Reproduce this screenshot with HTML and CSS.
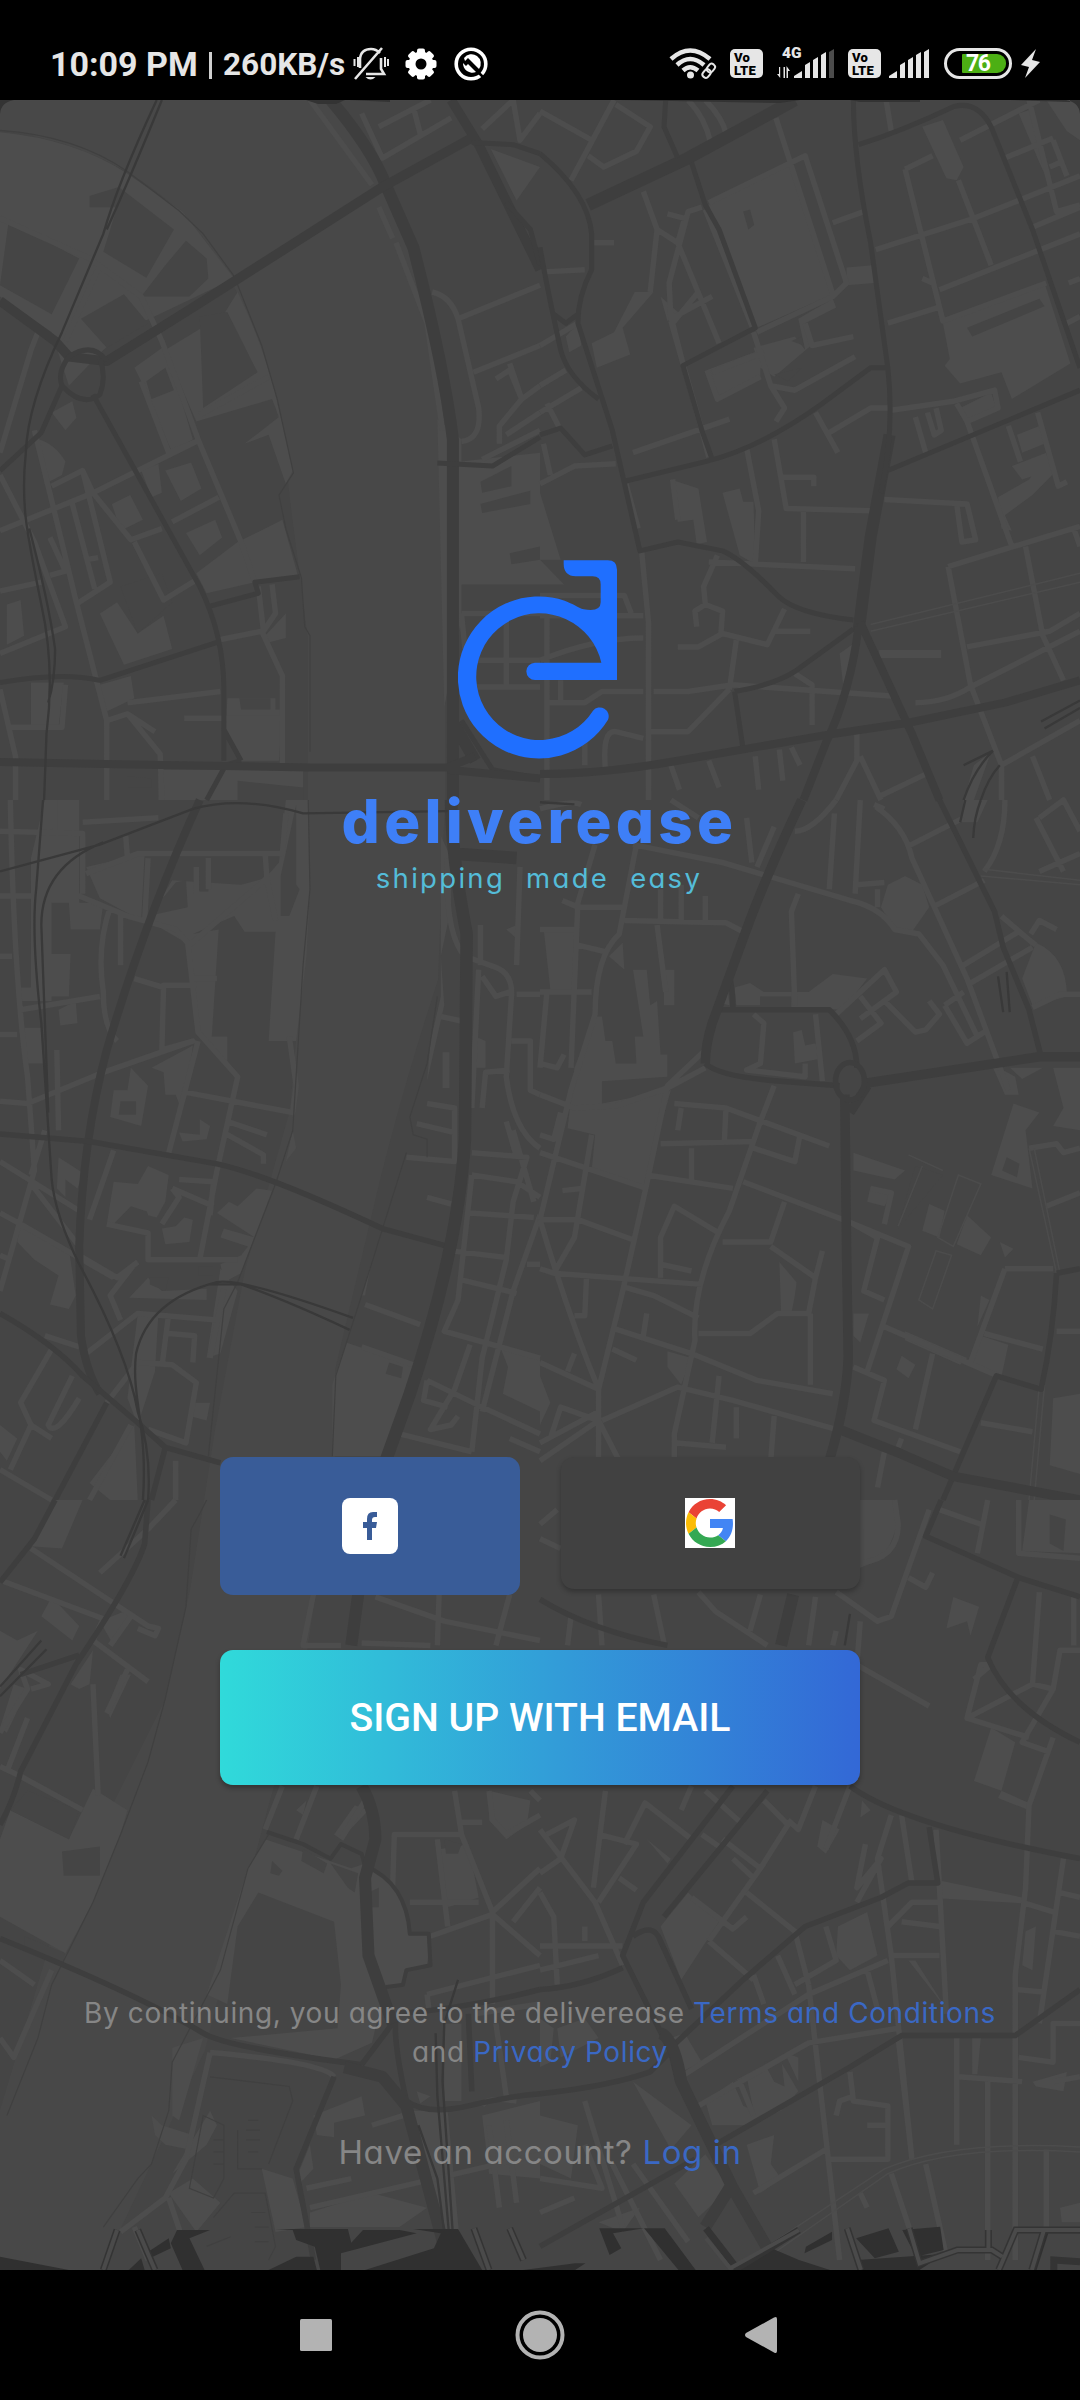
FILE: index.html
```html
<!DOCTYPE html>
<html lang="en">
<head>
<meta charset="utf-8">
<title>deliverease</title>
<link rel="stylesheet" href="styles.css">
</head>
<body>
<header class="status">
  <div class="status-left">
    <span class="clock">10:09 PM</span><span class="divider"></span><span class="speed">260KB/s</span>
    <svg class="i-bell" width="36" height="34" viewBox="0 0 36 34" fill="none" stroke="#e6e6e6" stroke-width="2.6"><path d="M7 21V13C7 5 12 2 18 2c4 0 7 2 9 4M28 11V22l3 5H13M2 32 29 1" /><path d="M12.500 30h10q-5 5-10 0z" fill="#e6e6e6" stroke="none"/><path d="M1.500 12v7M5 10v10M32 10v10M35 12v7" stroke-width="2"/></svg>
    <svg class="i-gear" width="32" height="32" viewBox="-16 -16 32 32"><g fill="#fff"><circle r="12.500"/><rect x="-4" y="-15.500" width="8" height="31" rx="2"/><rect x="-4" y="-15.500" width="8" height="31" rx="2" transform="rotate(45)"/><rect x="-4" y="-15.500" width="8" height="31" rx="2" transform="rotate(90)"/><rect x="-4" y="-15.500" width="8" height="31" rx="2" transform="rotate(135)"/></g><circle r="5.500"/></svg>
    <svg class="i-disc" width="34" height="34" viewBox="-17 -17 34 34"><circle r="14.800" fill="none" stroke="#fff" stroke-width="3.600"/><path d="M-7-6A9.300 9.300 0 0 1 8 5L1-2-3-6-6-3z" fill="#fff"/><path d="M-8-1A9.300 9.300 0 0 0 5 8L-3 0-5 2z" fill="#fff"/><path d="M7 8 14 15" stroke="#000" stroke-width="2.500"/></svg>
  </div>
  <div class="status-right">
    <svg class="i-wifi" width="48" height="33" viewBox="0 0 48 33" fill="none" stroke="#e6e6e6" stroke-width="4.500"><path d="M2 12Q21-5 41 12M8 18Q21 6 35 18M14 23.500Q21 17 29 23.500"/><circle cx="21.500" cy="28" r="3.500" fill="#e6e6e6" stroke="none"/><g stroke-width="2"><rect x="38.500" y="16" width="6.500" height="9" rx="3" transform="rotate(38 41 21)"/><rect x="34.500" y="21.500" width="6.500" height="9" rx="3" transform="rotate(38 37 26)"/></g></svg>
    <span class="volte"><b>Vo</b><b>LTE</b></span>
    <span class="net"><b>4G</b><svg width="57" height="30" viewBox="0 0 57 30"><g fill="#e6e6e6"><path d="M3.200 18v11L0 25h2V18zM6.500 18v11h1.500V18zM9.500 29V17l3.500 5h-2v7z"/><path d="M17 29v-2l8-5v7zM28 16l5-3v16h-5zM36 11l5-3v21h-5zM44 6l5-3v26h-5z"/></g><path d="M52 3l5-3v29h-5z" fill="#4c4c4c"/></svg></span>
    <span class="volte"><b>Vo</b><b>LTE</b></span>
    <svg class="i-bars" width="41" height="30" viewBox="16 0 41 30" fill="#e6e6e6"><path d="M17 29v-2l8-5v7zM28 16l5-3v16h-5zM36 11l5-3v21h-5zM44 6l5-3v26h-5zM52 3l5-3v29h-5z"/></svg>
    <span class="battery"><span class="level">76</span></span>
    <svg class="i-bolt" width="20" height="30" viewBox="0 0 20 30"><path d="M15 0 0 16l8 2-4 11L19 13l-8-2z" fill="#e6e6e6"/></svg>
  </div>
</header>

<main class="screen">
<svg class="map" width="1080" height="2170" viewBox="0 100 1080 2170" aria-hidden="true">
  <rect class="land" y="100" width="1080" height="2170"/>
  <!-- river -->
  <path class="water" d="M0 100H330Q372 130 395 220 440 300 445 450V800L438 980Q405 1080 380 1180L335 1370 335 1460 300 1700 270 1800 230 1950 205 2050 120 2230 100 2270H0V2110L60 1910 165 1700 190 1590 215 1430 245 1270 290 1110 308 900V640L290 500Q270 300 180 212 110 145 0 130Z"/>

  <g transform="translate(0 100) scale(.34439 .44643)">
    <path class="park" d="M0 72Q220 88 370 165L530 250 680 400 380 510 300 560 200 640 150 520 0 440ZM480 560 650 480 690 430Q760 540 800 660L850 830 830 860 780 750 710 770 810 710 790 670 570 720ZM390 600 480 550 560 760 500 790 410 630ZM110 760Q160 770 190 810L180 840 130 860ZM150 700 210 675 222 712 190 740ZM480 830 555 812 585 870 525 898ZM325 905 378 885 415 940 350 965ZM540 970 625 940 645 980 580 1020ZM570 1060 690 990 770 960 820 940 865 1065 740 1080 600 1105ZM290 1150 340 1125 400 1195 475 1155 500 1230 360 1265 320 1200ZM90 1305H185L170 1405 90 1400ZM290 1310 380 1290 390 1340 310 1370ZM1338 810 1568 790V1085H1338ZM1270 715 1340 760V1160L1290 1360ZM460 1500H880V1568H460ZM660 1340H800V1365H820L810 1480H700L655 1420ZM1425 110 1568 150 1500 225ZM20 1130 60 1120 70 1200 20 1220ZM770 1200 830 1150V1205L780 1215ZM410 830 460 815 470 880 440 890Z"/>
    <path class="land" d="M25 272 230 355 150 480 0 415ZM260 215 345 195 505 290 425 398 300 340 340 240H260ZM410 440 480 370 540 315 600 355 605 400 550 440ZM235 490 360 435 430 500 310 555ZM580 485 660 475 748 610 590 690ZM425 630 480 600 505 650 440 670ZM695 1340H785V1365H700ZM1395 855 1485 820V865L1400 880ZM1395 905 1540 875V905L1400 925ZM1480 1015 1568 1000V1030L1485 1040ZM350 1090 470 1060 500 1125 400 1195ZM370 1515 440 1520V1540H370ZM690 1525 880 1540V1568H690Z"/>
    <path class="minor" d="M0 265 260 355 410 440 470 540 575 760 700 990 740 1080M0 790 90 560 110 520M290 370 190 540M100 740 170 960 220 1120 310 1390V1568M0 965 270 880 570 765M240 830 320 1080 220 1130M0 840 100 990 190 1180 0 1240M150 865 240 830 270 880 380 985 470 960M210 905 275 1095M390 990 475 1120 570 1075M500 945 635 890M410 630 490 790 570 765M580 705 780 620M630 1210 760 1190 820 1290V1490M750 1090 765 1190 800 1150 790 1085M370 1350 640 1325M370 1375 465 1465 470 1568M310 1390 370 1375 450 1415M535 1385H820M30 1405H180L190 1310M0 1320 45 1470V1568M145 1065 190 1055 145 980M250 1030 285 1025M1050 30 1110 130 1310 40M1100 60 1250 0M1200 15 1220 75M1255 430Q1310 440 1330 490L1390 690Q1400 760 1340 765M1330 490 1568 415M1375 610 1568 550M1440 625 1480 605 1515 670 1568 640M1480 590 1515 670 1450 730V770M1470 750 1568 700M1400 805 1568 740M1100 240 1140 310M1150 320 1240 500 1285 740M1340 1150H1568M1340 1255H1568M1345 1315H1568M1470 1150V1315M1340 1150 1350 1230M1400 65 1490 0 1510 90 1568 30M900 0 1080 190M120 1080 0 1100"/>
    <path class="shore" d="M0 68Q220 80 370 160L520 248 590 300 680 395 760 550 805 670 852 835 810 885 830 960 875 1070 885 1180 900 1200V1460"/>
    <path class="major w10" d="M960 0Q1080 110 1120 190L1200 330Q1290 600 1315 760V1568M1320 1400 1380 1480"/>
    <path class="major w9" d="M0 450 160 540 200 575 310 585 560 465 1110 195 1370 85M1310 0 1390 100 1568 380"/>
    <path class="major w5" d="M310 585Q270 540 200 575 165 610 180 640L120 745 0 830M180 640Q240 690 290 660 310 620 290 580M270 660 400 840 580 1090Q650 1200 650 1320V1480M605 1135 750 1105 740 1080 870 1068M0 1305Q180 1280 290 1300L630 1215M600 1568 655 1490 700 1480M650 1410 700 1480M1270 813 1430 820 1568 755M1370 95 1490 100 1568 120M1470 230 1540 290 1568 370M1340 1390 1430 1500 1568 1520"/>
    <path class="major w8" d="M0 1483 340 1488 900 1495H1300L1380 1470M1300 1500 1568 1520"/>
    <path class="rail" d="M455 0Q340 190 300 300L180 520Q80 680 75 790C60 900 75 960 120 1130Q160 1270 135 1420L128 1568M470 0Q380 170 310 290M85 960Q140 1120 160 1230 160 1300 140 1350"/>
  </g>

  <g transform="translate(540 100) scale(.34439 .44643)">
    <path class="park" d="M490 235 720 140 850 435 630 510ZM1110 60 1170 45 1230 150 1210 180 1180 175ZM1170 500 1465 410 1540 590 1370 670 1340 610 1220 635 1175 595 1190 580ZM150 545 215 520 275 430 330 430 240 510 262 570 165 600ZM620 555 740 530 770 560 750 490 850 445 860 465 770 500 795 545 680 620 640 600ZM485 605 640 560 640 620 510 665ZM380 850 460 870 485 990 455 995 445 940 400 945ZM530 880 580 870 590 900 620 900 625 1040 580 1020ZM890 375 965 370 970 410 890 415ZM1330 890 1420 850 1480 790 1500 830 1430 885 1350 930 1370 965 1340 960ZM1370 820 1470 790 1480 830 1400 850ZM1385 750 1450 730 1465 770 1400 790ZM1220 690 1310 655 1325 690 1240 715ZM1390 30 1430 20 1480 190 1450 140ZM1470 0H1568V90L1530 70ZM870 1240 915 1215 880 1310ZM985 1232H1165V1250H985ZM0 880 60 1030H0ZM0 1030 70 1085H0ZM75 530 110 500 120 550 85 565ZM1260 1490 1310 1460 1260 1568H1230ZM350 440 400 475 370 495Z"/>
    <path class="land" d="M590 250 610 245 622 280 605 290ZM1240 510 1450 445 1465 462 1255 530ZM730 540 760 530 765 550ZM680 615 760 600 720 630Z"/>
    <path class="minor" d="M0 25 150 90M215 0 90 180M140 125 185 150 280 115 320 60 220 10M430 0Q480 40 495 95M480 0Q530 40 540 75M685 40 850 435M490 230 770 125 890 410 850 440 630 520M850 275 940 250M470 240 430 250 375 410 380 490 500 440M300 205 340 290 320 430M370 255 420 265 400 320 520 545M340 290 400 320M380 495 470 740 490 800M460 430 385 500 415 590M480 245 620 515M150 320H215M10 385 130 380M0 550 110 500M0 640 75 605M0 700 120 645M20 680 60 740M270 790 550 715M620 520 670 640 740 650 915 575M670 640 710 690 685 720M485 605 515 670 640 620M500 610 650 565M770 500 790 550 910 530M800 700 865 790M840 745 960 690H1015M680 760 715 915 960 920M705 845H795V865M765 920V1035M600 780 635 920 625 1040M250 860 285 960M385 850 400 940M490 1035 915 1050M515 1020 475 1090 480 1130 530 1145 525 1200M455 1180 450 1145 480 1130M400 1225H460L530 1195 660 1220 710 1140M680 1190H785M570 1210 550 1320M295 1010 315 1170V1568M330 1325H430L560 1310 1020 1335M320 1415H430L550 1320M740 1285 790 1310V1400M190 1500Q180 1410 220 1415L300 1430M0 1110H245L265 1150M0 1155H300M0 1255Q160 1205 300 1205M20 1350H130L180 1325H300M20 1110V1568M60 1300V1350M130 1420V1490M380 1490 405 1545M490 1480 520 1540M625 1470 635 1545M695 1455 705 1525M730 1450 755 1490M920 1420V1480L860 1568M930 1470 990 1568M985 1560 1120 1510M975 335 1260 265 1568 170M1060 155 1140 125M1060 155 1170 495 1470 410M1215 180 1310 370M1160 425 1568 300M1010 500 1155 465M1110 400 1140 410M1220 90 1450 0M1350 130 1490 85M1420 0 1500 250 1568 235M1430 285 1568 240M1490 90 1530 170M1480 150 1510 140M1530 500 1568 485M1535 410 1568 400M1020 695 1200 675 1320 650 1330 690 1240 720 1210 680M1090 710 1120 790M1125 700 1145 750 1165 740 1150 690M1240 720 1370 1000M1360 730 1395 810M1445 700 1505 865 1530 855M1000 895 1240 905 1265 985 1225 990 1210 905M1185 1045 1568 955M1185 1045 1250 1310 1340 1490V1568M1410 1000 1460 1200 1520 1300M1240 1225 1480 1190 1568 1150M1090 1350Q1180 1350 1250 1315L1568 1190M1340 1490 1568 1390M1430 1470 1480 1568M1550 960 1568 1000M1005 0 1020 70M0 860 100 820 220 815M10 770 30 840"/>
    <path class="thin" d="M960 1175 1568 1060M960 1190 1568 1080"/>
    <path class="major w11" d="M140 235 430 130 740 0"/>
    <path class="major w10" d="M925 1190 960 980 1015 750"/>
    <path class="major w5" d="M0 120Q140 210 150 300V380Q110 440 110 500L210 740 290 1010 400 990 530 1010Q590 1030 690 1110 740 1150 910 1165M0 330Q20 420 60 560 80 620 170 670M0 750 60 735 130 795 210 775M240 855 480 810Q640 780 820 680L960 600H1010M365 0 360 60 400 130M440 140 480 235 520 290 625 510 415 595 470 740 500 805M910 0Q910 130 960 320L1010 600Q1030 740 990 880M925 100Q1050 70 1200 15 1270 0 1310 60L1430 290 1568 600M1010 830 1568 650M565 1325Q680 1310 740 1280L910 1185M565 1325 590 1455M40 480 75 500 110 480"/>
    <path class="major w8" d="M0 1510Q180 1510 400 1480L850 1420 1070 1395 1350 1350 1568 1300M925 1180Q900 1330 830 1440L765 1568M930 1170 1080 1420 1160 1568"/>
    <path class="rail" d="M1455 1392 1568 1345M1465 1408 1568 1362M1230 1490 1315 1458 Q1260 1500 1230 1568M1335 1490 Q1300 1520 1280 1568"/>
  </g>

  <g transform="translate(0 800) scale(.34439 .44643)">
    <path class="park" d="M130 0H230V230H150V450H60V420H90V130ZM250 150 420 120 410 270 290 220ZM430 270 500 180 700 190 770 175 810 140 830 0H895L900 200 890 350 860 540H780L800 295H710L680 260 560 300 635 290 615 530 660 530V590L575 520 540 320ZM200 230H300L290 290H205ZM150 345H205L200 440H150ZM70 510H120L130 590H75ZM170 470 220 450 225 500 175 505ZM440 600 560 550 540 670 520 680 510 660H480L475 610ZM330 650H370L380 600 430 640 410 730 320 710ZM400 860 430 820 490 840 480 900 455 935 430 930ZM330 855 400 860 450 900 460 930 380 910 330 950H310ZM470 960 510 955 535 935 560 940 550 990 480 995ZM520 745 580 750V715L610 730 600 760 530 765ZM630 925 665 900 690 910 745 870 790 875 700 1060 650 1080 640 1040 700 1020 720 1000 640 980 650 960 740 980ZM60 950 200 1005 220 1110 200 1140 145 1130 170 1065 100 1030 50 990ZM430 1070 470 1100 600 1095 600 1120 375 1115ZM640 1050 690 1100 640 1240 600 1250ZM400 1150 460 1150 450 1280 400 1400 370 1340ZM170 800 240 835 225 870 190 850V890L165 870ZM1005 1215 1200 1265 1120 1470H965V1310ZM1050 1110 1100 980 1080 1030 1060 1110ZM1280 80 1310 130V240L1280 350 1290 460 1240 630 1250 540 1280 440ZM1285 565H1305V645H1285ZM1450 1220 1568 1250V1370L1460 1330 1475 1270ZM0 1400 50 1430 20 1480 0 1460ZM260 1530 390 1400 400 1568H320ZM1470 290 1500 280V310ZM850 740 860 780 830 810ZM560 1350 610 1350 600 1390 550 1380ZM1380 530 1410 540V600H1380Z"/>
    <path class="land" d="M350 675H395V705H345ZM430 260 510 185 540 180 545 240ZM560 180H605V205H580ZM860 10V190L870 200 840 260H815V170ZM435 1085V1070L490 1070 480 1100ZM575 1045H620V1065H575ZM1130 1260 1170 1270 1165 1295 1120 1285Z"/>
    <path class="minor" d="M30 0Q40 400 80 620L100 830 0 1100M0 70 240 75V210M0 215H230L370 260 510 290 545 320 575 520 690 620 630 830 580 1030M240 50 460 40M160 0V75M250 165 400 120 820 120 830 30M365 80 370 130M430 130 420 270M320 240Q280 330 300 430 300 510 340 540M350 250V370M60 470 290 440M0 350H35M0 525H50M0 675 80 680 300 610 560 540 470 560 475 415H570M390 400 475 420M570 150V210M605 130V200M770 120 775 175 550 325M775 175 800 270M550 400H630M540 655 850 700 860 640 840 530M660 720 775 750M650 745 765 795V815M490 790 575 540M130 740 90 840M165 560 170 740M0 810 230 920M90 860 230 1000M0 925 60 950 330 1070M330 785 260 940M500 870 620 910M520 850 620 855 610 930M500 870 520 890 470 950M310 950 430 970 430 1030 690 1030M230 1020 340 1070 400 1035M350 1165 320 1110 390 1040M250 1240 400 1150 630 1165M130 1200 230 1225M490 1150 470 1270M490 1195 565 1200 560 1260M650 1095 610 1250M310 1350 400 1260 500 1265 570 1305 540 1440 430 1410M150 1230 60 1350 90 1400 30 1500M210 1290 140 1400Q160 1430 230 1340M90 1400 150 1430M0 1500 150 1568M260 1568 380 1400M510 1480V1568M1300 130Q1290 300 1350 350L1440 375Q1490 390 1485 440L1470 620Q1490 740 1568 780M1390 380 1370 690M1395 280V370M1510 150 1500 370M1280 485 1340 495M1500 435H1568M1400 395 1440 440 1480 430M1485 540H1540V650L1568 660M1400 690 1410 610 1480 605M1240 680 1320 690V810L1180 800M1210 725 1320 745M1240 890 1310 905M1370 790 1530 800 1490 900 1470 1030 1400 1250 1370 1460M1370 840 1330 1120 1290 1190 1568 1250M1370 840 1500 855 1568 890M1365 925 1550 935M1310 1010 1470 1025M1340 1075 1500 1105M1060 1130 1220 1175M1568 930 1490 1100 1400 1370M1490 740 1550 900M1530 1040H1568M1050 1225 1200 1265M1240 1300 1400 1360 1568 1420M1240 1300 1230 1345 1300 1360M1365 1220 1320 1320 1250 1410 1310 1400 1330 1380M1160 1420 1370 1460M1480 1430 1568 1460M1470 720 1500 800M0 1020 30 1030"/>
    <path class="shore" d="M895 0 900 200 880 370 850 740 800 860 690 1080 650 1140 605 1470M1270 440 1240 590 1190 710 1200 750 1240 760V800M1180 790 1050 1110 975 1290 965 1470"/>
    <path class="major w8" d="M580 0Q420 270 310 560 240 760 230 1000L235 1200Q250 1280 290 1330"/>
    <path class="major w6" d="M0 748 260 765 630 815Q780 840 1110 960L1300 1000M0 1150Q160 1220 240 1290L400 1395 480 1450 640 1485M310 1350 160 1568M480 1450 440 1568"/>
    <path class="major w11" d="M1310 0Q1310 120 1355 300L1350 760Q1330 1010 1190 1330L1120 1480M1310 120 1500 130"/>
    <path class="rail" d="M125 0 105 200Q90 300 120 500L150 850Q160 930 230 1040 370 1240 400 1370 440 1460 430 1568M120 280 140 700M0 160 290 100 560 20Q700-10 880 30L1300 25M300 95Q120 150 120 280M1025 1160Q700 1070 630 1080 430 1120 395 1240C380 1340 430 1400 415 1568M1015 1187Q830 1120 700 1085 650 1085 610 1085"/>
  </g>

  <g transform="translate(540 800) scale(.34439 .44643)">
    <path class="park" d="M10 285 100 290 95 425 30 425ZM160 485H180L190 540H210L220 590H280L275 530H300L270 380H310L320 460 340 450 350 570H370V620L180 630V680L380 650 300 865 150 830 160 750 80 735 100 600ZM200 350 240 320 245 380ZM360 380H390V460H360ZM565 420 610 410 650 430H780L850 390 950 400 880 470 730 465 640 440V460H570ZM735 520 760 515 770 550 800 545 810 580 740 590ZM1010 190 1060 170 1110 190 1130 240 1080 295 1030 290 990 240ZM1230 0H1300L1270 50H1225ZM1400 400 1440 320Q1530 350 1530 440L1430 460ZM1375 680 1450 700 1410 740 1430 870 1310 840ZM1490 600H1568V740L1490 730 1520 690ZM910 790 1060 830 1030 850 910 830ZM960 865 1020 885 1000 910 950 900ZM1130 905 1175 920 1160 980 1110 965ZM1240 930 1310 980 1280 1020 1210 995ZM1335 990 1375 1005 1350 1025ZM695 1035 745 1080 740 1110 730 1150H700ZM910 1150H955L930 1215 910 1200ZM1060 1190 1240 1250 1220 1265 1060 1210ZM1050 1245 1090 1265 1070 1295 1035 1275ZM1280 1200 1360 1220 1340 1290 1250 1260ZM370 1235 440 1250 410 1310 370 1270ZM1490 1340 1568 1330V1510L1480 1490ZM525 455 545 420 550 460ZM1365 600 1460 600 1400 625ZM1280 1110 1305 1120 1270 1180ZM0 1290 30 1350 0 1400ZM1310 590 1380 620 1390 660 1350 660Z"/>
    <path class="land" d="M640 440 730 440V467H640ZM1355 800 1392 815 1385 845 1342 830ZM1090 820 1170 840 1040 960 1070 870Z"/>
    <path class="minor" d="M740 70Q790 70 860 0M855 30 840 200M930 0 915 210M0 20Q90 0 120 10M380 0 460 40M600 40 615 140M680 60 630 150M270 100 530 140 900 225Q990 240 1030 290L1100 300 1170 370 1270 530M975 15Q1060 60 1080 130L1240 400 1360 650M1000 20 970 10M1065 105 1230 40M1140 240 1290 180M1230 370 1390 295 1440 325M1250 410 1430 330M1340 260 1430 320M1425 300 1450 270 1500 290M1350 0Q1350 100 1290 160M1440 40 1520 160M1450 160 1568 120M1450 40 1520 0 1568 70M1430 465 1510 435H1568M750 210 730 250 740 460M860 480 1000 380 1035 430 930 490M930 440 990 500 920 540M1000 450 1090 520 1120 515 1160 480 1130 450M1175 460 1240 545 1300 515M1175 460 1230 430M620 480 650 500 640 590 600 605 770 620V590M800 480 820 630M680 640 640 720 550 920Q440 1080 450 1210L390 1420V1480M350 770 620 765M390 680 540 690 840 775M540 690 535 770M620 780 740 810 755 750M440 780V850M310 840 560 870M590 855 880 940 1070 1000 950 1280M410 690 400 740M280 100 230 300Q160 350 160 480L90 650 0 940M160 100 110 230 90 600M245 270 540 275 590 295M350 200V270M410 190V270M480 215V270M65 225 110 240H240M0 290H100M110 325 190 340M0 430H150M20 430 0 600M340 280 365 430M0 660 100 690 220 685 370 645 480 600M480 560 370 640 310 860 240 1100 170 1320V1480M0 790 310 870M150 750 100 980 40 1060 0 1050M0 940H110L270 985M65 875 120 870M0 750 40 760 60 700M0 940Q80 1150 170 1320M40 1060 470 1085M135 1070 130 1155H100M350 1070V980L390 910 520 970M350 1040 440 1055M530 990H670L710 900M670 1000 800 1070 820 1010M800 1070 780 1150H690L610 1195H460M785 1150V1310M240 1090 330 1110 460 1160M220 1185 440 1240 630 1300 850 1330M310 1150 300 1200M210 1230 280 1255M0 1260 170 1320M100 1240 80 1280M180 1390 400 1315 560 1345 860 1410M520 1290 500 1440M570 1360V1430M680 1380 670 1480M0 1440 170 1370M170 1390 60 1360 30 1430M0 1480 170 1390 230 1480M390 1440 540 1450M910 950 980 980 940 1100 1000 1120M1000 1180 1330 1290M910 1270 1000 1300 970 1390 1220 1460M1140 1240 1090 1410M1350 1050H1490M1350 1050 1250 1260M1290 1195 1460 1230M1500 1190H1568M1280 1395 1430 1415M1420 780 1500 770 1520 790 1568 780M1470 910 1568 880M1000 1460 980 1540M1050 1430 1040 1450M920 190 1000 185M980 200V240M960 870 1020 880 1000 950M0 590 50 600 70 570"/>
    <path class="thin" d="M1280 170 1568 190M1290 155 1568 180M1420 780 1500 1060M1435 780 1510 1060M1450 1310 1420 1568M1465 1310 1435 1568M1110 820 1040 955M1070 795 1170 830M1215 840 1155 980 1200 1000 1280 860ZM1150 1010 1100 1120 1140 1140 1195 1020Z"/>
    <path class="major w6" d="M1160 0 1320 250 1345 330 1420 470 1455 575M550 390Q560 430 560 465M520 470 840 470Q920 530 920 600M480 590Q520 620 700 630L870 640M1500 1060 1568 1050M1500 1060Q1490 1200 1455 1320L1325 1290 1170 1568"/>
    <path class="major w9" d="M760 0Q650 180 590 310L500 500Q480 550 480 590M940 635 1450 575H1568M885 660 890 1000 895 1250Q890 1350 840 1480M900 700 950 640M870 1410 1050 1465 1200 1515 1568 1568"/>
    <circle class="major w6" cx="900" cy="630" r="42"/>
    <path class="rail" d="M1235 0 1220 50M1280 0Q1260 40 1258 85M1330 395 1345 475M1355 385 1364 475M0 5 100 10"/>
  </g>

  <g transform="translate(0 1500) scale(.34439 .48469)">
    <path class="park" d="M160 0H240L180 100 80 95ZM150 200 230 260 210 290 120 240ZM0 270 50 290 110 270 0 390ZM290 250 330 300 385 240 360 230ZM205 380 270 310 260 380 230 390ZM310 430 350 360H380L320 450ZM30 640 200 700 270 595 370 640 350 690 270 830 190 935 0 860V700ZM770 700 1020 760 1060 750Q1180 800 1190 890L1250 900 1240 960 1180 970 1170 1000H1120L1080 1120 970 1155 670 1110 980 1090 990 1000 970 870 750 810 690 880 660 1040 600 1020 720 760ZM1160 910 1210 930 1200 960 1160 950ZM1280 720 1360 710 1390 820 1300 840ZM500 1130 590 1110 520 1280 500 1270ZM910 1270 1050 1230 1060 1270 970 1285V1315L920 1310ZM860 1400 900 1330 910 1380 870 1410ZM490 1430 560 1400 640 1450 570 1510ZM760 1380 850 1400 890 1500 800 1510ZM1180 1260 1300 1568 1340 1568 1300 1260ZM1400 1270 1568 1240V1400L1420 1390ZM900 1470 1080 1430 1240 1460 1160 1500H900ZM40 380 80 390 20 480 0 470ZM1030 630 1070 640 990 700 970 690ZM860 640 890 620 880 650ZM1420 600 1540 620 1530 670 1470 700 1420 660ZM1210 1220 1250 1230 1220 1245ZM1290 1080H1340V1240H1290ZM500 1390 610 1260 630 1290 600 1330ZM440 1270 470 1290 560 1310 550 1340 480 1330 450 1310Z"/>
    <path class="land" d="M80 600 230 640 200 700 30 640ZM180 725 290 715V775H185ZM790 745 820 765 810 775 785 770ZM880 720 950 750 940 770 875 745ZM960 750 1040 770 1030 810 1010 800ZM70 900 190 935 180 960 70 925ZM1070 810 1100 800V840H1070ZM1290 700 1340 710 1330 730H1295Z"/>
    <path class="minor" d="M90 100 430 260 460 265 450 280 400 265M0 165 300 245 270 290 430 375M290 150 430 60 510 0M380 240 320 300M370 350 310 440M0 480 80 390 60 350 140 380 90 390M20 560 80 450M0 550 60 570 240 640M270 380 285 610M0 950 100 1000M150 970 40 1150 0 1110M770 680 820 590M860 700 920 590M910 195 880 300 990 300M1050 295 1250 300M1090 200 1290 250 1568 290M1275 195 1270 300M1480 195 1440 300M1060 620 990 700M1140 800 1145 690H1340L1320 600M1340 690 1430 850 1568 760M1270 700 1300 880M1190 830H1390M1250 900 1430 855 1568 940M1430 850V1040M1240 1020 1568 960M1240 1020 1245 1050M1490 870 1568 800M1340 665H1400M610 1140Q940 1160 970 1190M610 1140 540 1360 480 1440 350 1510M390 1500 430 1568M490 1440 550 1568M900 1460 1568 1350M890 1420 1020 1400M1080 1290 1170 1270M1400 1250Q1410 1230 1500 1240M1420 1290 1450 1460M1470 1280 1500 1450M1440 1080 1470 1230M1380 1060 1568 1040M1540 600 1568 620M1420 600 1430 660 1470 690 1568 650"/>
    <path class="shore" d="M600 0Q580 30 555 60L540 220 480 410 430 540 350 690 270 830 150 1000 110 1110 20 1270M780 690 720 760 640 970 500 1160 490 1260 440 1370 400 1400 300 1500M610 1190 840 1210 850 1240 780 1370M590 1270 550 1420 620 1440 650 1400V1290ZM620 1480 680 1430 770 1430 800 1540 780 1568M690 1300V1380H760M720 1280H750M715 1300H755M715 1320H755M720 1345H750M620 1320H650M620 1345H650M620 1370H650M730 1470H770M740 1500H780M740 1530H780M600 1540 670 1520"/>
    <path class="major w6" d="M160 0 100 80 0 170M430 0 420 90Q390 160 220 340L60 560Q40 620 0 670M60 360 230 320M0 905Q400 1020 590 1100 660 1130 1050 1165M970 1190 860 1380 910 1568M1150 1070Q1140 1110 1180 1240 1240 1270 1360 1250 1480 1230 1568 1225M1140 1080 1050 1165M1150 1060Q1350 1050 1568 1010M1360 1060 1370 1220"/>
    <path class="major w4" d="M775 685 880 710 960 740 990 710 1050 730 1060 755Q1180 790 1190 895H1245L1250 960 1180 970 1170 1000 1120 1005"/>
    <path class="major w10" d="M1040 195 1020 300M1050 590Q1090 640 1090 700L1060 780 1070 940 1140 1080M1000 1170 1110 1190 1180 1250 1300 1568"/>
    <path class="rail" d="M420 0 350 115M430 0 360 120M120 290 0 385M135 308 0 405M1330 990 1290 1080 1285 1200 1320 1568M1265 1100 1270 1230 1310 1568M1215 1290 1270 1400 1300 1568"/>
  </g>

  <g transform="translate(540 1500) scale(.34439 .48469)">
    <path class="park" d="M929 0H1030L1040 50 1000 120 929 140ZM1420 0H1568V110L1400 105ZM1200 200 1275 220 1250 280 1240 250 1180 265ZM1310 470 1380 500 1340 600 1260 580ZM1340 600 1420 625V640L1330 615ZM1160 785 1400 820V832L1165 822ZM350 880 430 810 520 870 410 990ZM865 880 950 850 980 940 900 970 860 940ZM380 1110 420 1100 470 1160 410 1180ZM480 1240 560 1200 640 1170 700 1160 750 1220 700 1260 600 1290 500 1290ZM270 1200 440 1290 380 1340ZM390 1410 480 1350 550 1420 460 1480ZM600 1330 680 1310 670 1370 700 1400 640 1430ZM50 1090 130 1070 170 1110 60 1150ZM0 1070 40 1090 30 1160 0 1170ZM820 660 870 680 830 730 805 715ZM310 700 380 740 370 750ZM935 620 960 640 930 655ZM710 1140 750 1150V1200ZM1410 890 1440 880 1430 970 1400 960ZM1430 1200 1530 1180 1520 1220 1440 1210ZM170 1490 290 1460 240 1510ZM1510 1460 1568 1450V1490H1515ZM1180 1050 1070 950 1090 950ZM0 1270 110 1290 90 1400 0 1370ZM1255 1110H1280L1270 1185H1255Z"/>
    <path class="land" d="M1480 30 1527 40 1520 105 1480 90ZM560 1200 600 1190 620 1260 590 1250ZM650 1160 700 1150 710 1210 680 1200Z"/>
    <path class="minor" d="M0 50 50 20M0 80 60 100M170 195 180 300M330 195 360 295M90 240 80 300M460 190 510 230 660 300M640 195 610 270M800 200 780 300M860 190 980 250 1020 240 1130 20M930 250 920 340 1130 425M860 270 850 300M1160 20 1280 50M1300 0 1270 110M1070 160 1120 180 1140 150M1568 120 1390 110V0M930 60V130Q1040 120 1040 50L1030 0M1450 190 1430 380 1240 450 1280 340 1310 340 1260 370M1430 380 1490 390 1510 310H1568M1550 200V300M1490 390 1400 500 1480 520M1490 490 1420 630 1410 800 1380 980V1568M1240 450 1420 490M1400 830 1490 850M1520 740 1450 1080M1510 810 1568 820M1490 890 1568 900M1380 1010 1460 1015M0 680 160 830 240 960M0 770 60 740 100 660 20 690M190 600 155 800M170 690 280 710 170 830M245 710 305 625 440 700M230 780 280 805M410 640 440 590M480 600 590 670M470 690 530 720M560 740 620 780M530 700 640 760 720 670 650 620M720 660 750 680 800 590M490 910 650 750M490 910 620 990M600 810 740 890 780 1000M440 820 560 885 600 860M900 590 830 720M920 830 990 740 920 800 945 710M1020 650 980 740 1020 940 1080 1360M1050 650 1080 790M1150 680 1160 800 1180 1060M1010 880 1080 830H1160M1020 940H1160M1050 870 1160 880M0 920H240M0 970 170 940M50 1000 40 860 0 810M130 880V910M410 1190 780 1020 1010 950M620 980 650 1040M690 940 740 1020M830 880 860 950 740 1000M950 970 980 1050M780 1000 870 1568M460 1250 780 1120 1040 1090M580 1200 620 1270M900 1180 910 1240 1010 1250V1360H830M860 1270 870 1240 910 1230M950 1290H1010M620 1430 830 1340M1040 1110 1080 1360M1210 1110V1330M1215 1190 1400 1200M1300 1200V1568M1390 1150 1490 1160V1080H1568M1490 1200 1568 1190M1470 1340V1500M1120 1370 1180 1560M1020 1390 1090 1540M930 1430 950 1460M0 1400 180 1420 130 1330M270 1370 430 1530M210 1370 350 1568M0 1470 100 1440M130 1240 240 1500"/>
    <path class="thin" d="M600 1568 1000 1380Q1200 1320 1568 1335M650 1568 1010 1390Q1200 1330 1568 1345"/>
    <path class="major w6" d="M0 205Q150 270 370 300M900 590Q1050 670 1568 740M1165 0 1120 75 1390 160 1568 200M1385 165 1300 325Q1360 430 1568 500M0 1010Q120 1005 240 965M560 590 300 830 240 940 380 1140 400 1200 500 1340 680 1568M660 600 360 860M270 900Q330 870 350 910L440 1050M380 1130 590 990 770 880 990 820 1070 790H1155L1130 675M0 1225Q200 1210 320 1180L390 1130M510 1330 900 1170 1050 1105H1380L1568 1010M0 1540 450 1360"/>
    <path class="major w10" d="M735 195 700 300M350 1100Q390 1110 410 1200L560 1420 680 1568M480 1500 550 1420"/>
    <path class="rail" d="M900 235 885 300"/>
  </g>

  <path fill="#333" d="M0 100H14Q1 102 0 114ZM1080 100H1066Q1079 102 1080 114ZM306 100H345L336 104H318ZM350 100H390V102ZM620 100H800L780 103ZM850 100H920V102H860ZM1010 100H1070V102Z"/>
  <g transform="translate(0 2180) scale(.68878 .33333)">
    <path fill="#303030" d="M0 230 100 270H0ZM257 150H305L275 175 297 270H265L248 190ZM212 220 245 175 248 205 215 237ZM187 270 205 235 210 270ZM400 147H505L510 188 527 150H580L605 160 495 220V270H465L457 200 430 180 425 150ZM390 270 430 230H455L460 270ZM530 270 630 205 640 160 600 147H665L700 270ZM870 145H935L890 160 902 205 885 225ZM935 145H965L1010 270H985ZM1170 200 1208 155V180L1168 220ZM1243 175 1290 145 1305 215 1270 235ZM1310 150 1365 140 1370 210 1330 230ZM1070 270 1120 205 1160 240 1205 270ZM1245 240 1370 222 1335 270H1250ZM1500 270 1515 150H1568V160H1522L1505 270ZM835 270 850 250 835 250 760 270Z"/>
    <g fill="none" stroke="#343434" stroke-width="7"><path d="M170 150 150 270M200 150 225 270M688 145 710 270M740 145 760 240M1025 145 1070 265 1160 150M1230 145 1250 270M1320 145 1335 250 1390 210H1440L1455 230M1435 150V205M1568 150 1475 150 1450 270M1515 155 1498 270M1530 270V240L1568 245"/></g>
    <g fill="none" stroke="#4a4a4a" stroke-width="4"><path d="M170 150 150 270M200 150 225 270M688 145 710 270M740 145 760 240M1025 175 1060 265 1160 150M1230 145 1250 270M1320 145 1335 250 1390 210H1440L1455 230M1435 150V205M1568 150 1475 150 1450 270M1515 155 1498 270"/></g>
  </g>
</svg>

  <div class="content">
    <section class="brand">
      <svg class="logo" width="159" height="199" viewBox="415 90 477 595" fill="#1f6fff"><path d="M732 90H864Q892 90 892 118V449H646a26 26 0 0 1 0-52H845A190 190 0 1 0 820 541A26.500 26.500 0 0 1 865 568A243 243 0 1 1 735 211C760 220 775 232 792 237Q843 246 843 216V162Q843 138 819 138H768Q732 136 732 100Z"/></svg>
      <h1 class="name">deliverease</h1>
      <p class="tagline">shipping made easy</p>
    </section>
    <section class="actions">
      <div class="social">
        <button class="facebook" aria-label="Facebook"><svg width="56" height="56" viewBox="0 0 56 56"><rect width="56" height="56" rx="8" fill="#fff"/><path d="M25 42V30h-4v-6h4v-3q0-7 6-7h4v5h-2q-3 0-3 3v2h5l-1 6h-4v12z" fill="#395c98"/></svg></button>
        <button class="google" aria-label="Google"><svg width="50" height="50" viewBox="-1 -1 50 50"><path fill="#fff" d="M-1-1h50v50H-1z"/><path fill="#EA4335" d="M24 9.500c3.540 0 6.710 1.220 9.210 3.600l6.850-6.850C35.900 2.380 30.470 0 24 0 14.620 0 6.510 5.380 2.560 13.220l7.980 6.190C12.430 13.720 17.740 9.500 24 9.500z"/><path fill="#4285F4" d="M46.980 24.550c0-1.570-.15-3.090-.38-4.550H24v9.020h12.940c-.58 2.960-2.260 5.480-4.780 7.180l7.730 6c4.510-4.180 7.090-10.360 7.090-17.650z"/><path fill="#FBBC05" d="M10.530 28.590c-.48-1.450-.76-2.990-.76-4.590s.27-3.140.76-4.590l-7.980-6.190C.92 16.460 0 20.120 0 24c0 3.880.92 7.540 2.560 10.780l7.970-6.190z"/><path fill="#34A853" d="M24 48c6.480 0 11.930-2.130 15.890-5.810l-7.730-6c-2.150 1.450-4.920 2.300-8.160 2.300-6.260 0-11.570-4.220-13.470-9.910l-7.980 6.190C6.510 42.620 14.620 48 24 48z"/></svg></button>
      </div>
      <button class="signup">SIGN UP WITH EMAIL</button>
    </section>
    <section class="legal">
      <p class="terms">By continuing, you agree to the deliverease <a>Terms and Conditions</a></p>
      <p class="terms">and <a>Privacy Policy</a></p>
      <p class="login">Have an account? <a>Log in</a></p>
    </section>
  </div>
</main>

<nav class="navbar">
  <svg width="32" height="32"><rect width="32" height="32" rx="1.500" fill="#b3b3b3"/></svg>
  <svg class="home" width="50" height="50" viewBox="-25 -25 50 50"><circle r="22.500" fill="none" stroke="#b3b3b3" stroke-width="4"/><circle r="17" fill="#b3b3b3"/></svg>
  <svg width="32" height="38" viewBox="0 0 32 38"><path d="M29 1.500Q32 0 32 3V35Q32 38 29 36.500L1 21Q-1 19 1 17z" fill="#b3b3b3"/></svg>
</nav>
</body>
</html>
```

FILE: styles.css
```css
* { box-sizing: border-box; }
body { margin: 0; width: 1080px; height: 2400px; background: #000; display: flex; flex-direction: column; overflow: hidden; font-family: Inter, "Open Sans", sans-serif; }
h1, p { margin: 0; white-space: nowrap; }
button { border: 0; padding: 0; margin: 0; }
svg { display: block; flex: none; }

.status { height: 100px; flex: none; display: flex; justify-content: space-between; padding: 0 39px 0 50px; color: #e6e6e6; font-family: Roboto, sans-serif; font-weight: 700; }
.status-left, .status-right { display: flex; align-items: center; padding-top: 27px; }
.clock { font-size: 34px; line-height: 40px; width: 149px; white-space: nowrap; }
.divider { width: 3px; height: 27px; background: #cfcfcf; margin: 4px 11px 0 10px; }
.speed { font-size: 31.500px; line-height: 40px; width: 123px; padding-top: 2px; white-space: nowrap; }
.i-bell { margin-left: 7px; }
.i-gear { margin-left: 16px; }
.i-disc { margin-left: 17px; }
.i-wifi { margin-right: 13px; }
.volte { width: 33px; height: 29px; border-radius: 5px; background: #e6e6e6; color: #000; display: flex; flex-direction: column; justify-content: center; font-size: 14px; padding-left: 4px; }
.volte b { height: 13px; line-height: 13px; font-size: 13px; font-weight: 900; letter-spacing: .3px; }
.net { position: relative; width: 57px; height: 30px; margin: 0 14px; }
.net b { position: absolute; left: 5px; top: -4px; font-size: 15.500px; line-height: 16px; }
.i-bars { margin: 0 15px 0 7px; }
.battery { width: 68px; height: 31px; border: 3px solid #e6e6e6; border-radius: 16px; padding: 3px 3px 3px 15px; display: flex; }
.level { flex: 1; background: #4caf14; border-radius: 1px 9px 9px 1px; color: #fff; font-size: 23px; line-height: 20px; padding-left: 4px; letter-spacing: -1.500px; }
.i-bolt { margin-left: 9px; }

.screen { position: relative; height: 2170px; flex: none; }
.map { position: absolute; top: 0; left: 0; }
.map path, .map circle { vector-effect: non-scaling-stroke; }
.land { fill: #454545; }
.water { fill: #484848; }
.park { fill: #4d4d4d; }
.minor { fill: none; stroke: #4d4d4d; stroke-width: 5.500px; stroke-linejoin: round; }
.thin { fill: none; stroke: #4c4c4c; stroke-width: 1.500px; }
.shore { fill: none; stroke: #404040; stroke-width: 1.200px; }
.major { fill: none; stroke: #3e3e3e; stroke-linejoin: round; }
.w4 { stroke-width: 4px; }
.w5 { stroke-width: 5px; }
.w6 { stroke-width: 5.500px; }
.w8 { stroke-width: 8px; }
.w9 { stroke-width: 9.500px; }
.w10 { stroke-width: 12px; }
.w11 { stroke-width: 12.500px; }
.rail { fill: none; stroke: #393939; stroke-width: 2.300px; }

.content { position: relative; display: flex; flex-direction: column; align-items: center; padding-top: 460px; }
.brand { display: flex; flex-direction: column; align-items: center; height: 897px; }
.logo { margin-right: 5px; }
.name { font-size: 60px; line-height: 72px; font-weight: 800; color: #3e7ff7; letter-spacing: 4.300px; font-feature-settings: "cv11"; margin: 26px 1px 0 0; }
.tagline { font-size: 27.500px; line-height: 34px; color: #54bcd8; letter-spacing: 2.300px; word-spacing: 11px; font-feature-settings: "cv11"; margin: 4px 2px 0 0; }
.actions { width: 640px; height: 428px; display: flex; flex-direction: column; }
.social { display: flex; justify-content: space-between; align-items: flex-start; height: 193px; }
.facebook, .google { display: flex; align-items: center; justify-content: center; border-radius: 13px; }
.facebook { width: 300px; height: 138px; background: #395c98; }
.google { width: 299px; height: 132px; background: #414141; box-shadow: 0 3px 5px rgba(0, 0, 0, .25); padding-right: 1px; }
.signup { height: 135px; border-radius: 13px; background: linear-gradient(90deg, #30dada, #329dd8 52%, #3368d6); color: #fff; font: 500 39.200px/135px Roboto, sans-serif; padding-top: 1px; box-shadow: 0 3px 5px rgba(0, 0, 0, .3); }
.legal { display: flex; flex-direction: column; align-items: center; padding-top: 109px; color: #868686; font-feature-settings: "cv11"; }
.legal a { color: #3a68c4; }
.terms { font-size: 28px; line-height: 39px; letter-spacing: .6px; }
.login { font-size: 33px; line-height: 44px; letter-spacing: .6px; margin-top: 58px; }

.navbar { height: 130px; flex: none; display: flex; align-items: center; justify-content: space-between; padding: 0 303px 0 300px; }
.home { margin-left: 3px; }
```
